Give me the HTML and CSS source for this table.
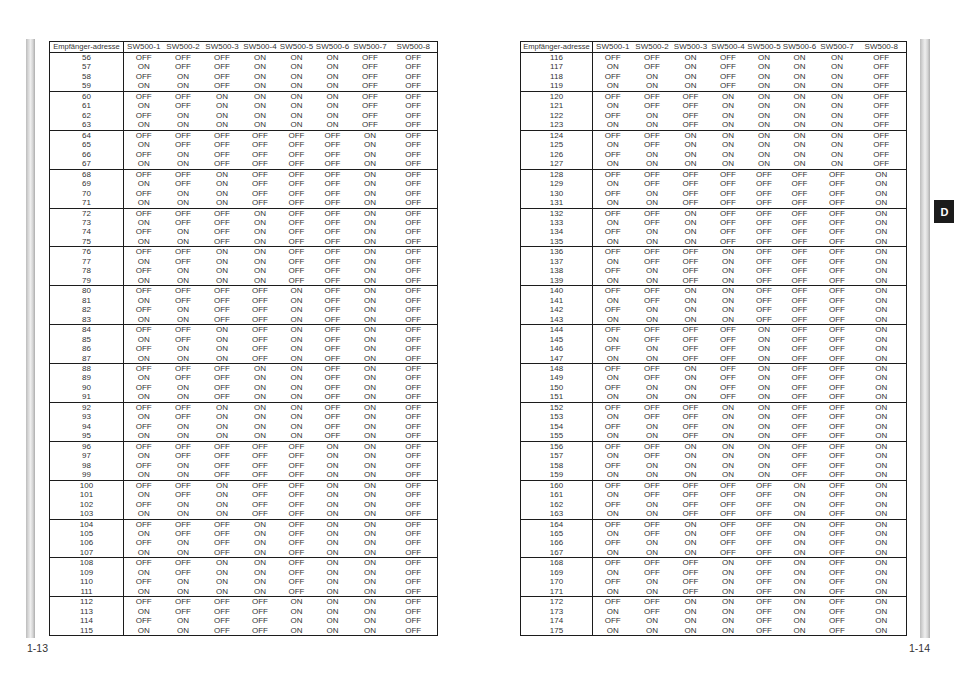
FILE: index.html
```html
<!DOCTYPE html>
<html lang="de">
<head>
<meta charset="utf-8">
<title>Empfänger-adresse 1-13 / 1-14</title>
<link rel="stylesheet" href="styles.css">
</head>
<body>
<div class="spread">
  <section class="page page-left">
    <div class="page-body">
      <div class="edge"></div>
      <table class="codes" id="t1" data-start="56">
        <colgroup>
          <col class="c-addr"><col style="width:40px"><col style="width:39px"><col style="width:39px"><col style="width:37px"><col style="width:36px"><col style="width:36px"><col style="width:39px"><col style="width:48px">
        </colgroup>
        <thead>
          <tr><th class="addr">Empfänger-adresse</th><th>SW500-1</th><th>SW500-2</th><th>SW500-3</th><th>SW500-4</th><th>SW500-5</th><th>SW500-6</th><th>SW500-7</th><th>SW500-8</th></tr>
        </thead>
      </table>
    </div>
    <div class="folio">1-13</div>
  </section>
  <section class="page page-right">
    <div class="page-body">
      <table class="codes codes-right" id="t2" data-start="116">
        <colgroup>
          <col class="c-addr-r"><col style="width:40px"><col style="width:39px"><col style="width:38px"><col style="width:37px"><col style="width:35px"><col style="width:36px"><col style="width:39px"><col style="width:50px">
        </colgroup>
        <thead>
          <tr><th class="addr">Empfänger-adresse</th><th>SW500-1</th><th>SW500-2</th><th>SW500-3</th><th>SW500-4</th><th>SW500-5</th><th>SW500-6</th><th>SW500-7</th><th>SW500-8</th></tr>
        </thead>
      </table>
      <div class="edge edge-right"></div>
      <div class="tab">D</div>
    </div>
    <div class="folio folio-right">1-14</div>
  </section>
</div>
<script src="script.js"></script>
</body>
</html>
```
FILE: styles.css
```css
html, body {
  margin: 0;
  background: #ffffff;
}
body {
  width: 954px;
  height: 677px;
  overflow: hidden;
  font-family: "Liberation Sans", Arial, sans-serif;
  color: #333333;
}
.spread {
  display: flex;
  align-items: flex-start;
  padding-top: 39px;
}
.page-left {
  margin-left: 26px;
}
.page-right {
  margin-left: 82px;
}
.page-body {
  display: flex;
  align-items: flex-start;
}
.edge {
  width: 9px;
  height: 599px;
  background: linear-gradient(to right, #bcbcbc 0%, #dcdcdc 30%, #eeeeee 50%, #d6d6d6 75%, #adadad 100%);
}
.edge-right {
  width: 10px;
  margin-left: 13px;
}
.codes {
  margin-top: 2px;
  margin-left: 14px;
  width: 388px;
  border-collapse: collapse;
  table-layout: fixed;
  border: 1px solid #1c1c1c;
  font-size: 8px;
  color: #333333;
}
.codes-right {
  margin-left: 0;
  width: 386px;
}
.c-addr { width: 74px; }
.c-addr-r { width: 72px; }
.codes th {
  font-weight: normal;
  font-size: 8px;
  height: 10px;
  line-height: 10px;
  padding: 0;
  white-space: nowrap;
  text-align: center;
  border-bottom: 1px solid #1c1c1c;
  overflow: visible;
}
.codes th.addr {
  font-size: 7.6px;
}
.codes td {
  padding: 0;
  height: 9.47px;
  line-height: 9.47px;
  text-align: center;
  white-space: nowrap;
}
.codes tbody + tbody {
  border-top: 1px solid #1c1c1c;
}
.codes .addr {
  border-right: 1px solid #1c1c1c;
}
.tab {
  margin-left: 4px;
  margin-top: 161px;
  width: 21px;
  height: 23px;
  background: #1b1b1b;
  color: #ffffff;
  font-weight: bold;
  font-size: 11px;
  display: flex;
  align-items: center;
  justify-content: center;
}
.folio {
  margin-top: 4px;
  font-size: 10.5px;
  line-height: 12px;
  color: #333333;
  padding-left: 1px;
}
.folio-right {
  text-align: right;
  padding-left: 0;
  padding-right: 25px;
}
```
FILE: script.js
```js
(function () {
  function fill(table) {
    var start = parseInt(table.getAttribute('data-start'), 10);
    for (var g = 0; g < 15; g++) {
      var body = document.createElement('tbody');
      for (var r = 0; r < 4; r++) {
        var n = start + g * 4 + r;
        var tr = document.createElement('tr');
        var a = document.createElement('td');
        a.className = 'addr';
        a.textContent = String(n);
        tr.appendChild(a);
        for (var k = 0; k < 8; k++) {
          var td = document.createElement('td');
          td.textContent = ((n >> k) & 1) ? 'ON' : 'OFF';
          tr.appendChild(td);
        }
        body.appendChild(tr);
      }
      table.appendChild(body);
    }
  }
  var tables = document.querySelectorAll('table.codes');
  for (var i = 0; i < tables.length; i++) fill(tables[i]);
})();
```
